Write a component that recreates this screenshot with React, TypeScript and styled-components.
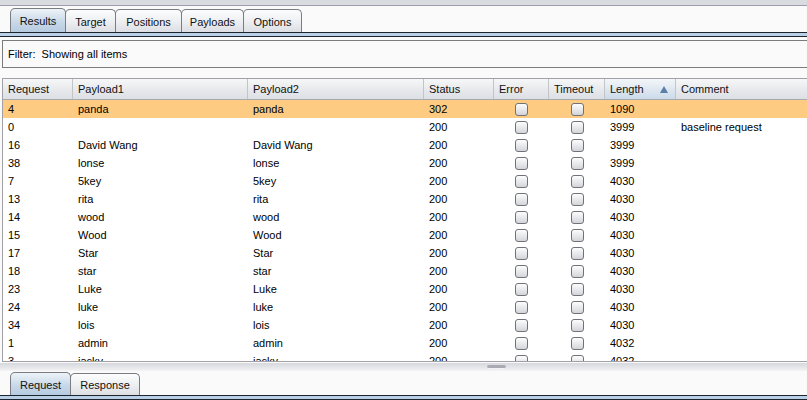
import React from "react";
import styled, { createGlobalStyle } from "styled-components";

const Global = createGlobalStyle`
  html, body { margin: 0; padding: 0; background: #fafafa; overflow: hidden; }
  body { font-family: "Liberation Sans", Arial, sans-serif; font-size: 11px; color: #000; }
`;

const Page = styled.div`
  width: 807px;
  height: 400px;
  overflow: hidden;
  display: flex;
  flex-direction: column;
  background: #fafafa;
`;

const TopBand = styled.div`
  height: 5px;
  background: #d8dbe0;
  border-bottom: 1px solid #9d9dab;
  flex: none;
`;

const TabRow = styled.div<{ $h: number }>`
  height: ${(p) => p.$h}px;
  display: flex;
  align-items: flex-end;
  padding-left: 10px;
  flex: none;
`;

const Tab = styled.div<{ $active?: boolean; $h: number; $w: number }>`
  height: ${(p) => p.$h}px;
  width: ${(p) => p.$w}px;
  box-sizing: border-box;
  display: flex;
  align-items: center;
  justify-content: center;
  padding-top: 1px;
  border: 1px solid #7a7c82;
  border-bottom: none;
  border-radius: 5px 5px 0 0;
  margin-right: -1px;
  background: ${(p) =>
    p.$active
      ? "linear-gradient(#eef3f8, #c6d7e8 60%, #b7cbe0)"
      : "linear-gradient(#fdfdfd, #eceef1 55%, #dcdee3)"};
  color: #111;
  white-space: nowrap;
`;

const Strip = styled.div`
  flex: none;
  height: 3px;
  background: #b9cfe6;
  border-top: 1px solid #1c2430;
  border-bottom: 1px solid #1c2430;
`;

const Body = styled.div`
  flex: none;
  display: flex;
  flex-direction: column;
  padding: 3px 0 0 2px;
  width: 860px;
`;

const FilterBox = styled.div`
  height: 26px;
  border: 1px solid #7b7b7b;
  display: flex;
  align-items: center;
  padding-left: 5px;
  white-space: pre;
  background: #fafafa;
`;

const Table = styled.div`
  margin-top: 10px;
  height: 282px;
  border: 1px solid #a0a0a6;
  border-right: none;
  background: #fff;
  overflow: hidden;
`;

const cols = "70px 175px 176px 70px 55px 56px 71px 1fr";

const HeaderRow = styled.div`
  display: grid;
  grid-template-columns: ${cols};
  height: 21px;
  box-sizing: border-box;
  border-bottom: 1px solid #a7a9ae;
`;

const HeadCell = styled.div<{ $sorted?: boolean }>`
  display: flex;
  align-items: center;
  justify-content: space-between;
  padding: 0 5px;
  border-right: 1px solid #c2c4c8;
  background: ${(p) =>
    p.$sorted
      ? "linear-gradient(#f3f6f9, #dfe8f1 50%, #cbdaea)"
      : "linear-gradient(#f6f7f8, #e8eaed 50%, #dcdfe4)"};
  color: #111;
`;

const SortArrow = styled.span`
  width: 0;
  height: 0;
  border-left: 4px solid transparent;
  border-right: 4px solid transparent;
  border-bottom: 7px solid #5a80aa;
  margin-right: 2px;
`;

const Row = styled.div<{ $selected?: boolean }>`
  display: grid;
  grid-template-columns: ${cols};
  height: 18px;
  background: ${(p) => (p.$selected ? "#fecb82" : "#fff")};
`;

const Cell = styled.div<{ $center?: boolean }>`
  display: flex;
  align-items: center;
  justify-content: ${(p) => (p.$center ? "center" : "flex-start")};
  padding: 0 ${(p) => (p.$center ? "0" : "5px")};
  white-space: nowrap;
  overflow: hidden;
`;

const Check = styled.span`
  width: 11px;
  height: 11px;
  border: 1px solid #707278;
  border-radius: 3px;
  background: linear-gradient(#fdfdfd, #e4e5e8 60%, #d3d5da);
  box-sizing: content-box;
`;

const Splitter = styled.div`
  flex: none;
  height: 8px;
  margin-top: 1px;
  background: linear-gradient(#d6d8dd, #e6e7ea 60%, #f4f4f6);
  padding-left: 487px;
  display: flex;
  align-items: flex-start;
`;

const Grip = styled.div`
  width: 19px;
  height: 3px;
  margin-top: 2px;
  border-radius: 2px;
  background: #a9abb3;
  border-bottom: 1px solid #f2f2f4;
`;

type R = [string, string, string, string, string, string];
const rows: R[] = [
  ["4", "panda", "panda", "302", "1090", ""],
  ["0", "", "", "200", "3999", "baseline request"],
  ["16", "David Wang", "David Wang", "200", "3999", ""],
  ["38", "lonse", "lonse", "200", "3999", ""],
  ["7", "5key", "5key", "200", "4030", ""],
  ["13", "rita", "rita", "200", "4030", ""],
  ["14", "wood", "wood", "200", "4030", ""],
  ["15", "Wood", "Wood", "200", "4030", ""],
  ["17", "Star", "Star", "200", "4030", ""],
  ["18", "star", "star", "200", "4030", ""],
  ["23", "Luke", "Luke", "200", "4030", ""],
  ["24", "luke", "luke", "200", "4030", ""],
  ["34", "lois", "lois", "200", "4030", ""],
  ["1", "admin", "admin", "200", "4032", ""],
  ["3", "jacky", "jacky", "200", "4032", ""],
];

const headers = ["Request", "Payload1", "Payload2", "Status", "Error", "Timeout", "Length", "Comment"];

const topTabs: [string, number][] = [
  ["Results", 56],
  ["Target", 51],
  ["Positions", 67],
  ["Payloads", 63],
  ["Options", 59],
];

const bottomTabs: [string, number][] = [
  ["Request", 61],
  ["Response", 70],
];

export default function App() {
  return (
    <Page>
      <Global />
      <TopBand />
      <TabRow $h={26}>
        {topTabs.map(([t, w], i) => (
          <Tab key={t} $active={i === 0} $h={i === 0 ? 24 : 23} $w={w}>
            {t}
          </Tab>
        ))}
      </TabRow>
      <Strip />
      <Body>
        <FilterBox>{"Filter:  Showing all items"}</FilterBox>
        <Table>
          <HeaderRow>
            {headers.map((h) => (
              <HeadCell key={h} $sorted={h === "Length"}>
                <span>{h}</span>
                {h === "Length" && <SortArrow />}
              </HeadCell>
            ))}
          </HeaderRow>
          {rows.map((r, i) => (
            <Row key={i} $selected={i === 0}>
              <Cell>{r[0]}</Cell>
              <Cell>{r[1]}</Cell>
              <Cell>{r[2]}</Cell>
              <Cell>{r[3]}</Cell>
              <Cell $center>
                <Check />
              </Cell>
              <Cell $center>
                <Check />
              </Cell>
              <Cell>{r[4]}</Cell>
              <Cell>{r[5]}</Cell>
            </Row>
          ))}
        </Table>
      </Body>
      <Splitter>
        <Grip />
      </Splitter>
      <TabRow $h={24}>
        {bottomTabs.map(([t, w], i) => (
          <Tab key={t} $active={i === 0} $h={i === 0 ? 23 : 22} $w={w}>
            {t}
          </Tab>
        ))}
      </TabRow>
      <Strip />
    </Page>
  );
}
